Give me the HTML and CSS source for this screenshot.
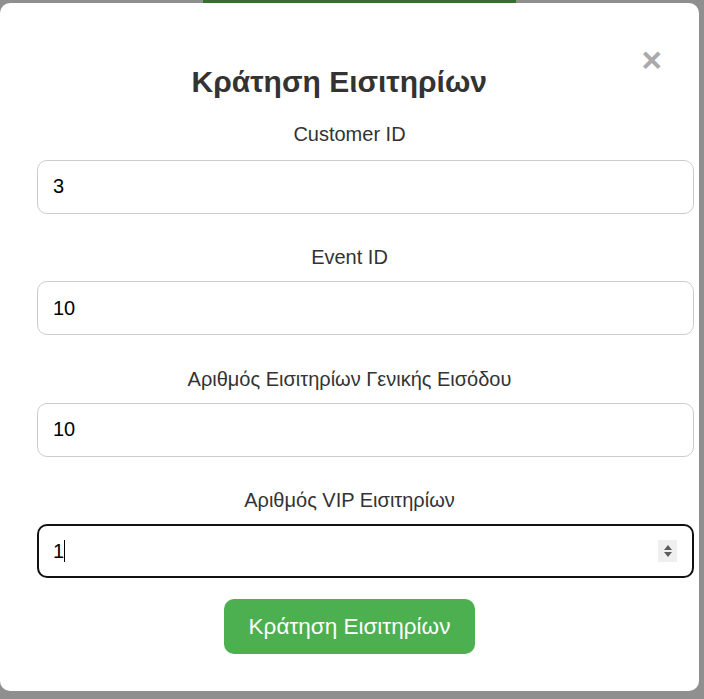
FILE: index.html
```html
<!DOCTYPE html>
<html lang="el">
<head>
<meta charset="utf-8">
<title>Κράτηση Εισιτηρίων</title>
<link rel="stylesheet" href="styles.css">
</head>
<body>
<div class="backdrop-strip"></div>
<div class="modal">
  <span class="close">&times;</span>
  <h2 class="modal-title">Κράτηση Εισιτηρίων</h2>
  <form class="booking-form">
    <label class="field-label" for="cid">Customer ID</label>
    <input class="field-input" id="cid" type="text" value="3">
    <label class="field-label" for="eid">Event ID</label>
    <input class="field-input" id="eid" type="text" value="10">
    <label class="field-label" for="gen">Αριθμός Εισιτηρίων Γενικής Εισόδου</label>
    <input class="field-input" id="gen" type="text" value="10">
    <label class="field-label" for="vip">Αριθμός VIP Εισιτηρίων</label>
    <div class="input-wrap">
      <input class="field-input field-focused" id="vip" type="text" value="1">
      <span class="caret"></span>
      <span class="spinner">
        <svg width="10" height="16" viewBox="0 0 10 16"><path d="M5 2 L9 7 L1 7 Z" fill="#5c5c5c"/><path d="M1 9 L9 9 L5 14 Z" fill="#5c5c5c"/></svg>
      </span>
    </div>
    <button class="submit-btn" type="button">Κράτηση Εισιτηρίων</button>
  </form>
</div>
</body>
</html>
```
FILE: styles.css
```css
html, body {
  margin: 0;
  padding: 0;
}
body {
  background: #8f8f8f;
  width: 704px;
  height: 699px;
  overflow: hidden;
  font-family: "Liberation Sans", Arial, sans-serif;
  font-size: 20px;
  color: #333;
}
.backdrop-strip {
  margin-left: 203px;
  width: 313px;
  height: 3px;
  background: #35702f;
}
.modal {
  background: #fff;
  border-radius: 10px;
  padding: 37px;
  width: 625px;
}
.close {
  float: right;
  font-size: 35px;
  font-weight: bold;
  color: #aaa;
  line-height: 40px;
}
.modal-title {
  font-size: 30px;
  font-weight: bold;
  text-align: center;
  margin: 25px 0 23px;
  line-height: 34.5px;
  color: #333;
}
.booking-form {
  display: block;
}
.field-label {
  display: block;
  text-align: center;
  line-height: 23px;
  margin-bottom: 12px;
  color: #333;
}
.field-label:first-child {
  margin-bottom: 14px;
}
.field-input {
  display: block;
  width: 100%;
  box-sizing: content-box;
  height: 22px;
  padding: 15px;
  border: 1px solid #ccc;
  border-radius: 10px;
  font-family: "Liberation Sans", Arial, sans-serif;
  font-size: 20px;
  color: #000;
  margin: 0 0 32.5px 0;
  outline: none;
  background: #fff;
}
.input-wrap {
  position: relative;
  margin-bottom: 21px;
}
.input-wrap .field-input {
  margin-bottom: 0;
}
.field-focused {
  border: 2px solid #111;
  padding: 14px 14px;
}
.caret {
  position: absolute;
  left: 27px;
  top: 16px;
  width: 1px;
  height: 22px;
  background: #000;
}
.spinner {
  position: absolute;
  left: 621px;
  top: 16px;
  width: 19px;
  height: 22px;
  background: #efefef;
  display: flex;
  align-items: center;
  justify-content: center;
}
.submit-btn {
  display: block;
  margin: 0 auto;
  background: #4caf50;
  color: #fff;
  border: none;
  border-radius: 10px;
  padding: 15px 25px;
  font-family: "Liberation Sans", Arial, sans-serif;
  font-size: 22.5px;
  line-height: 25px;
}
```
